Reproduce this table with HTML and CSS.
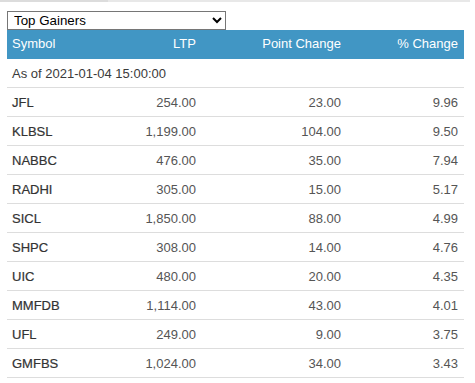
FILE: index.html
```html
<!DOCTYPE html>
<html>
<head>
<meta charset="utf-8">
<link rel="stylesheet" href="styles.css">
</head>
<body>
<div class="topline"></div>
<div class="wrap">
  <select class="picker">
    <option>Top Gainers</option>
  </select>
  <table class="grid">
    <colgroup>
      <col class="c1"><col class="c2"><col class="c3"><col class="c4">
    </colgroup>
    <thead>
      <tr><th class="l">Symbol</th><th>LTP</th><th>Point Change</th><th>% Change</th></tr>
    </thead>
    <tbody>
      <tr><td class="l asof" colspan="4">As of 2021-01-04 15:00:00</td></tr>
      <tr><td class="l sym">JFL</td><td>254.00</td><td>23.00</td><td>9.96</td></tr>
      <tr><td class="l sym">KLBSL</td><td>1,199.00</td><td>104.00</td><td>9.50</td></tr>
      <tr><td class="l sym">NABBC</td><td>476.00</td><td>35.00</td><td>7.94</td></tr>
      <tr><td class="l sym">RADHI</td><td>305.00</td><td>15.00</td><td>5.17</td></tr>
      <tr><td class="l sym">SICL</td><td>1,850.00</td><td>88.00</td><td>4.99</td></tr>
      <tr><td class="l sym">SHPC</td><td>308.00</td><td>14.00</td><td>4.76</td></tr>
      <tr><td class="l sym">UIC</td><td>480.00</td><td>20.00</td><td>4.35</td></tr>
      <tr><td class="l sym">MMFDB</td><td>1,114.00</td><td>43.00</td><td>4.01</td></tr>
      <tr><td class="l sym">UFL</td><td>249.00</td><td>9.00</td><td>3.75</td></tr>
      <tr><td class="l sym">GMFBS</td><td>1,024.00</td><td>34.00</td><td>3.43</td></tr>
    </tbody>
  </table>
</div>
</body>
</html>
```
FILE: styles.css
```css
html, body {
  margin: 0;
  padding: 0;
  background: #fff;
  font-family: "Liberation Sans", Arial, sans-serif;
  font-size: 13px;
}
.topline {
  height: 2px;
  background: linear-gradient(to right, #dcdcdc 0, #dcdcdc 108px, #e8e8e8 108px, #e8e8e8 470px, #fff 470px);
}
.wrap {
  padding: 9px 11px 0 7px;
}
.picker {
  display: block;
  width: 219px;
  height: 19px;
  margin: 0;
  padding: 0 0 0 2px;
  border: 1px solid #767676;
  border-radius: 0;
  background: #fff;
  font-family: "Liberation Sans", Arial, sans-serif;
  font-size: 13.33px;
  color: #000;
}
.grid {
  width: 457px;
  border-collapse: collapse;
  table-layout: fixed;
  margin-top: 0;
}
.c1 { width: 100px; }
.c2 { width: 95px; }
.c3 { width: 145px; }
.c4 { width: 117px; }
.grid th {
  background: #4196c4;
  color: #fff;
  font-weight: normal;
  height: 27px;
  padding: 0 6px 2px 5px;
  text-align: right;
  vertical-align: middle;
}
.grid td {
  height: 28px;
  padding: 0 6px 0 5px;
  text-align: right;
  vertical-align: middle;
  color: #555;
  border-bottom: 1px solid #ddd;
}
.grid th.l, .grid td.l {
  text-align: left;
}
.grid td.sym {
  color: #333;
  -webkit-text-stroke: 0.2px #333;
}
.grid td.asof {
  color: #3a3a3a;
}
```
